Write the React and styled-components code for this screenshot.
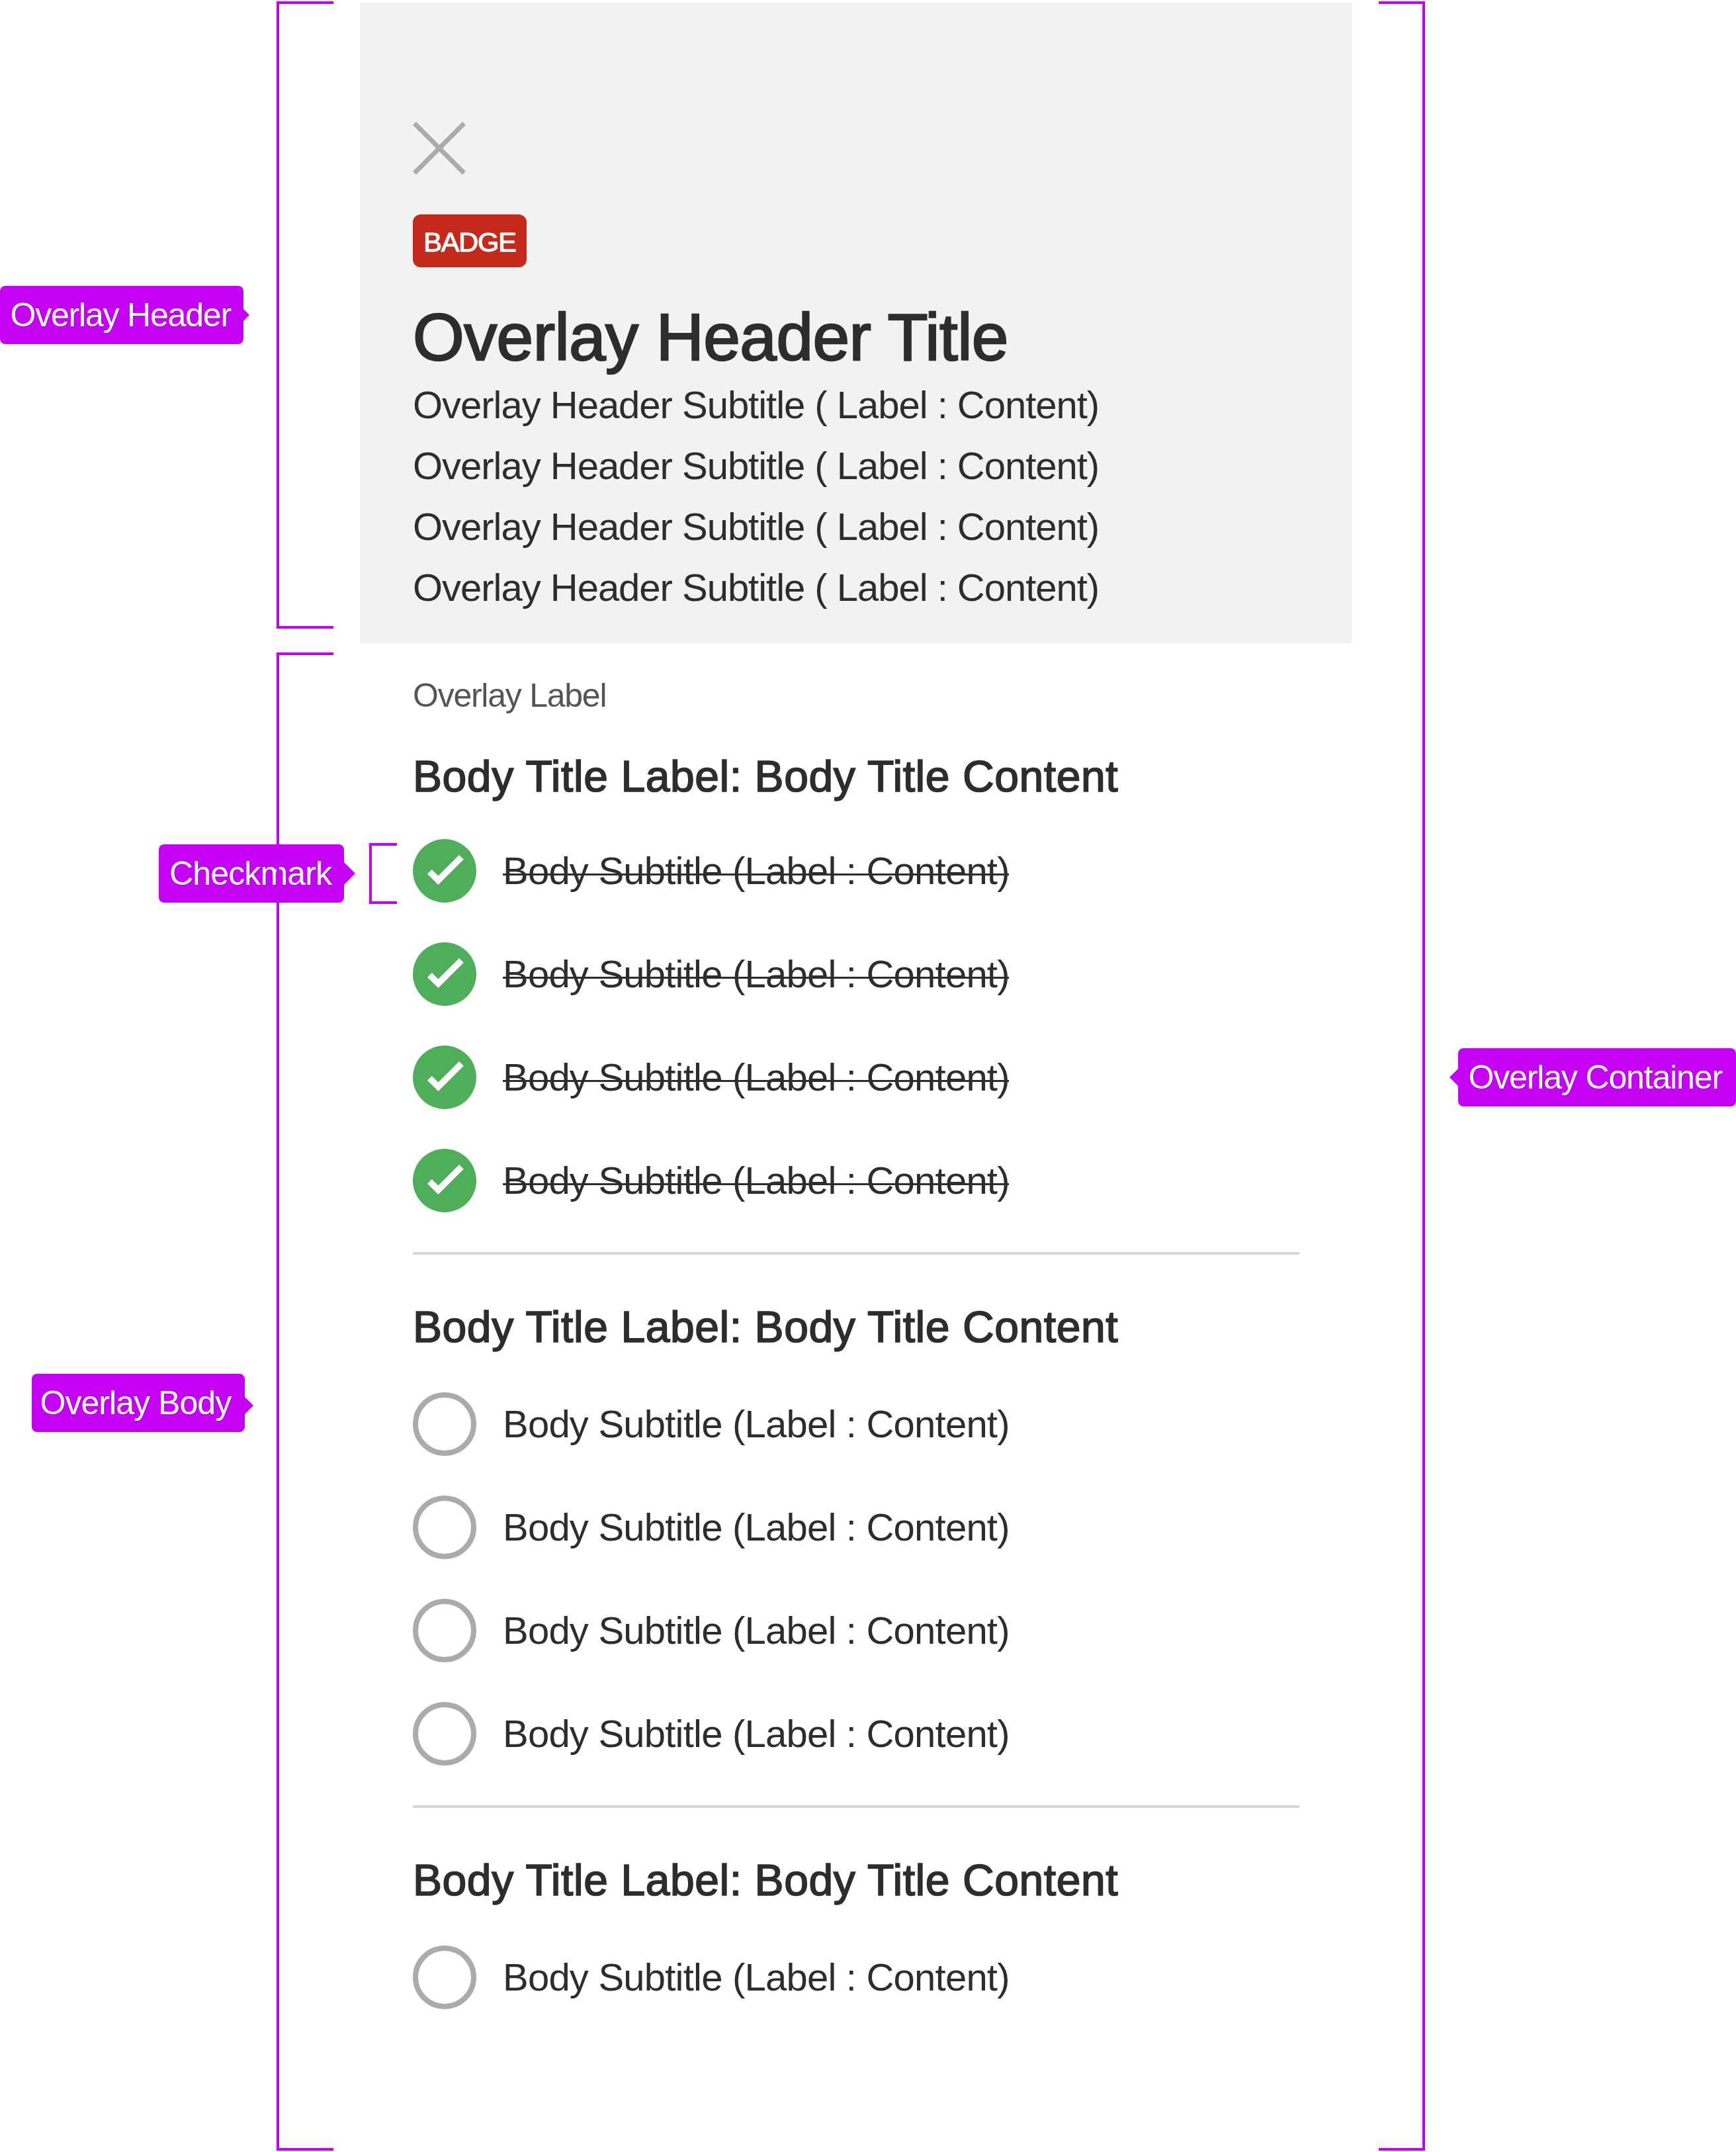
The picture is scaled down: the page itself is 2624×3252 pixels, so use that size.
import React from "react";
import styled, { createGlobalStyle, css } from "styled-components";

const ACCENT = "#c400f5";
const INK = "#2d2d2d";

const GlobalStyle = createGlobalStyle`
  * { box-sizing: border-box; }
  body {
    margin: 0;
    background: #fff;
    color: ${INK};
    font-family: "Liberation Sans", Arial, Helvetica, sans-serif;
  }
  h1, h2, p, ul { margin: 0; padding: 0; font-weight: 400; }
  ul { list-style: none; }
`;

const Page = styled.div`
  position: relative;
  display: flex;
  width: 2624px;
  height: 3252px;
  overflow: hidden;
`;

const LeftRail = styled.div`
  display: flex;
  flex-direction: column;
  gap: 36px;
  width: 544px;
  padding: 2px 0;
`;

const RailSection = styled.div`
  display: flex;
  align-items: center;
  height: ${(p) => p.$height}px;
  padding-left: ${(p) => p.$inset || 0}px;
`;

const RightRail = styled.div`
  display: flex;
  align-items: center;
  width: 580px;
  padding: 2px 0 2px 40px;
`;

const Bracket = styled.div`
  align-self: stretch;
  flex: none;
  width: ${(p) => p.$width || 86}px;
  margin-left: ${(p) => (p.$side === "right" ? 0 : "auto")};
  margin-right: ${(p) => (p.$side === "right" ? 0 : 40)}px;
  border: 4px solid ${ACCENT};
  ${(p) =>
    p.$side === "right"
      ? css`border-left: 0;`
      : css`border-right: 0;`}
`;

const Callout = styled.div`
  position: relative;
  flex: none;
  width: ${(p) => p.$width}px;
  height: 88px;
  padding-left: ${(p) => p.$pad}px;
  border-radius: 8px;
  background: ${ACCENT};
  color: #fff;
  font-size: 50px;
  line-height: 88px;
  letter-spacing: ${(p) => p.$spacing}px;
  white-space: nowrap;

  &::after {
    content: "";
    position: absolute;
    top: calc(50% - ${(p) => p.$half - (p.$drop || 0)}px);
    ${(p) => (p.$side === "left" ? "right: 100%;" : "left: 100%;")}
    border: ${(p) => p.$half}px solid transparent;
    ${(p) =>
      p.$side === "left"
        ? css`border-left: 0; border-right: ${p.$tip}px solid ${ACCENT};`
        : css`border-right: 0; border-left: ${p.$tip}px solid ${ACCENT};`}
  }
`;

const ContainerCallout = styled(Callout)`
  margin: 4px 0 0 50px;
`;

const BodyCallout = styled(Callout)`
  margin-top: 4px;
`;

const CheckmarkNote = styled.div`
  position: absolute;
  z-index: -1;
  left: 240px;
  top: 1273.6px;
  display: flex;
  align-items: center;
  width: 400px;
  height: 92px;
`;

const SmallBracket = styled(Bracket)`
  width: 42px;
  margin: 0 0 0 38px;
`;

const Overlay = styled.main`
  width: 1500px;
  padding-top: 4px;
`;

const Header = styled.header`
  display: flex;
  flex-direction: column;
  align-items: flex-start;
  height: 968px;
  padding: 180px 80px 0;
  background: #f2f2f2;
`;

const CloseIcon = styled.svg`
  display: block;
  width: 80px;
  height: 80px;
`;

const Badge = styled.span`
  width: 172px;
  height: 80px;
  margin-top: 60px;
  border-radius: 12px;
  background: #c5291b;
  color: #fff;
  font-size: 41.5px;
  line-height: 83px;
  letter-spacing: -1.2px;
  text-align: center;
  -webkit-text-stroke: 1px #fff;
`;

const Title = styled.h1`
  margin-top: 48px;
  font-size: 100px;
  line-height: 114px;
  letter-spacing: -0.58px;
  white-space: nowrap;
  -webkit-text-stroke: 2.4px ${INK};
`;

const Subtitle = styled.p`
  font-size: 58px;
  line-height: 92px;
  letter-spacing: -1.02px;
  white-space: nowrap;
`;

const Body = styled.section`
  padding: 49px 80px 0;
`;

const Label = styled.p`
  color: #555;
  font-size: 50px;
  line-height: 60px;
  letter-spacing: -1.25px;
`;

const Group = styled.section`
  padding-top: ${(p) => p.$top}px;
  & + & { border-top: 4px solid #d6d6d6; }
`;

const GroupTitle = styled.h2`
  margin-bottom: ${(p) => p.$gap}px;
  font-size: 66px;
  line-height: 80px;
  letter-spacing: 0.57px;
  white-space: nowrap;
  -webkit-text-stroke: 1.7px ${INK};
`;

const List = styled.ul`
  display: flex;
  flex-direction: column;
  gap: 60px;
  padding-bottom: 60px;
`;

const Item = styled.li`
  display: flex;
  align-items: center;
  gap: 40px;
  height: 96px;
`;

const CheckIcon = styled.svg`
  flex: none;
  width: 96px;
  height: 96px;
`;

const EmptyCircle = styled.span`
  flex: none;
  width: 96px;
  height: 96px;
  border: 8px solid #ababab;
  border-radius: 50%;
`;

const ItemText = styled.span`
  position: relative;
  font-size: 58px;
  line-height: 96px;
  letter-spacing: -0.78px;
  white-space: nowrap;
  ${(p) =>
    p.$done &&
    css`
      &::after {
        content: "";
        position: absolute;
        left: 0;
        right: 1px;
        top: 52px;
        height: 3px;
        background: ${INK};
      }
    `}
`;

const groups = [
  { done: true, count: 4, top: 52, gap: 55 },
  { done: false, count: 4, top: 69, gap: 59 },
  { done: false, count: 1, top: 69, gap: 59 },
];

function Check() {
  return (
    <CheckIcon viewBox="0 0 96 96">
      <circle cx="48" cy="48" r="48" fill="#4fae5a" />
      <path d="M22 52.7 28.8 46 38.4 55.4 70 24 76.8 30.7 38.4 69Z" fill="#fff" />
    </CheckIcon>
  );
}

export default function App() {
  return (
    <Page>
      <GlobalStyle />
      <CheckmarkNote>
        <Callout $width={280} $pad={16} $spacing={-0.85} $half={17} $tip={17}>Checkmark</Callout>
        <SmallBracket />
      </CheckmarkNote>
      <LeftRail>
        <RailSection $height={948}>
          <Callout $width={368} $pad={15.5} $spacing={-1.2} $half={9} $tip={9}>Overlay Header</Callout>
          <Bracket />
        </RailSection>
        <RailSection $height={2264} $inset={48}>
          <BodyCallout $width={322} $pad={12.5} $spacing={-0.95} $half={13} $tip={13} $drop={4}>
            Overlay Body
          </BodyCallout>
          <Bracket />
        </RailSection>
      </LeftRail>
      <Overlay>
        <Header>
          <CloseIcon viewBox="0 0 80 80">
            <path d="M2.5 2.5 77.5 77.5M77.5 2.5 2.5 77.5" stroke="#ababab" strokeWidth="7.07" />
          </CloseIcon>
          <Badge>BADGE</Badge>
          <Title>Overlay Header Title</Title>
          {[0, 1, 2, 3].map((n) => (
            <Subtitle key={n}>Overlay Header Subtitle ( Label : Content)</Subtitle>
          ))}
        </Header>
        <Body>
          <Label>Overlay Label</Label>
          {groups.map((g, i) => (
            <Group key={i} $top={g.top}>
              <GroupTitle $gap={g.gap}>Body Title Label: Body Title Content</GroupTitle>
              <List>
                {Array.from({ length: g.count }, (_, n) => (
                  <Item key={n}>
                    {g.done ? <Check /> : <EmptyCircle />}
                    <ItemText $done={g.done}>Body Subtitle (Label : Content)</ItemText>
                  </Item>
                ))}
              </List>
            </Group>
          ))}
        </Body>
      </Overlay>
      <RightRail>
        <Bracket $side="right" $width={70} />
        <ContainerCallout $side="left" $width={420} $pad={15.5} $spacing={-1.15} $half={13} $tip={13}>
          Overlay Container
        </ContainerCallout>
      </RightRail>
    </Page>
  );
}
